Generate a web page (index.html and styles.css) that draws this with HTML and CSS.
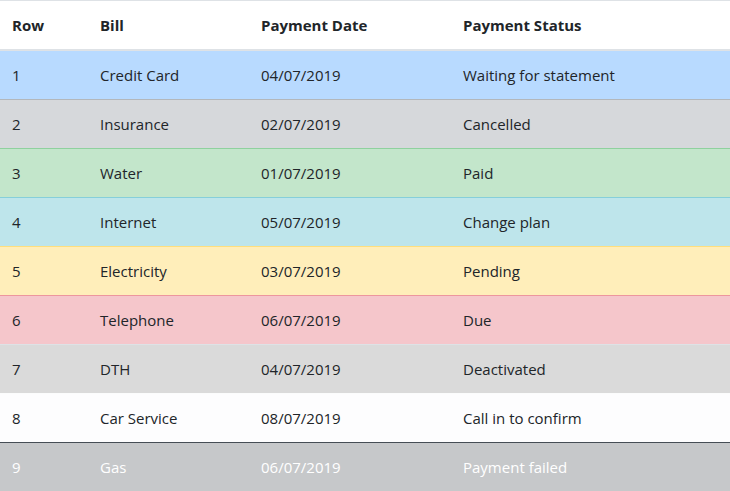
FILE: index.html
```html
<!DOCTYPE html>
<html>
<head>
<meta charset="utf-8">
<link rel="stylesheet" href="styles.css">
</head>
<body>
<table class="table">
  <colgroup>
    <col class="c1"><col class="c2"><col class="c3"><col class="c4">
  </colgroup>
  <thead>
    <tr><th>Row</th><th>Bill</th><th>Payment Date</th><th>Payment Status</th></tr>
  </thead>
  <tbody>
    <tr class="t-primary"><td>1</td><td>Credit Card</td><td>04/07/2019</td><td>Waiting for statement</td></tr>
    <tr class="t-secondary"><td>2</td><td>Insurance</td><td>02/07/2019</td><td>Cancelled</td></tr>
    <tr class="t-success"><td>3</td><td>Water</td><td>01/07/2019</td><td>Paid</td></tr>
    <tr class="t-info"><td>4</td><td>Internet</td><td>05/07/2019</td><td>Change plan</td></tr>
    <tr class="t-warning"><td>5</td><td>Electricity</td><td>03/07/2019</td><td>Pending</td></tr>
    <tr class="t-danger"><td>6</td><td>Telephone</td><td>06/07/2019</td><td>Due</td></tr>
    <tr class="t-active"><td>7</td><td>DTH</td><td>04/07/2019</td><td>Deactivated</td></tr>
    <tr class="t-light"><td>8</td><td>Car Service</td><td>08/07/2019</td><td>Call in to confirm</td></tr>
    <tr class="t-dark"><td>9</td><td>Gas</td><td>06/07/2019</td><td>Payment failed</td></tr>
  </tbody>
</table>
</body>
</html>
```
FILE: styles.css
```css
html, body {
  margin: 0;
  padding: 0;
  background: #fff;
}
body {
  font-family: "Open Sans", "Noto Sans", sans-serif;
  font-size: 15px;
  line-height: 24px;
  color: #212529;
}
.table {
  width: 730px;
  border-collapse: collapse;
  table-layout: fixed;
}
.c1 { width: 88px; }
.c2 { width: 161px; }
.c3 { width: 202px; }
.c4 { width: 279px; }
.table th,
.table td {
  padding: 12px;
  text-align: left;
  vertical-align: top;
  border-top: 1px solid #dee2e6;
}
.table th {
  font-weight: 700;
  border-bottom: 2px solid #dee2e6;
}
.t-primary td { background: #b8daff; border-top-color: #7abaff; }
.t-secondary td { background: #d6d8db; border-top-color: #b3b7bb; }
.t-success td { background: #c3e6cb; border-top-color: #8fd19e; }
.t-info td { background: #bee5eb; border-top-color: #86cfda; }
.t-warning td { background: #ffeeba; border-top-color: #ffdf7e; }
.t-danger td { background: #f5c6cb; border-top-color: #ed969e; }
.t-active td { background: #dadada; }
.t-light td { background: #fdfdfe; border-top-color: #fbfcfc; }
.t-dark td { background: #c6c8ca; border-top-color: #454d55; color: #fff; }
```
